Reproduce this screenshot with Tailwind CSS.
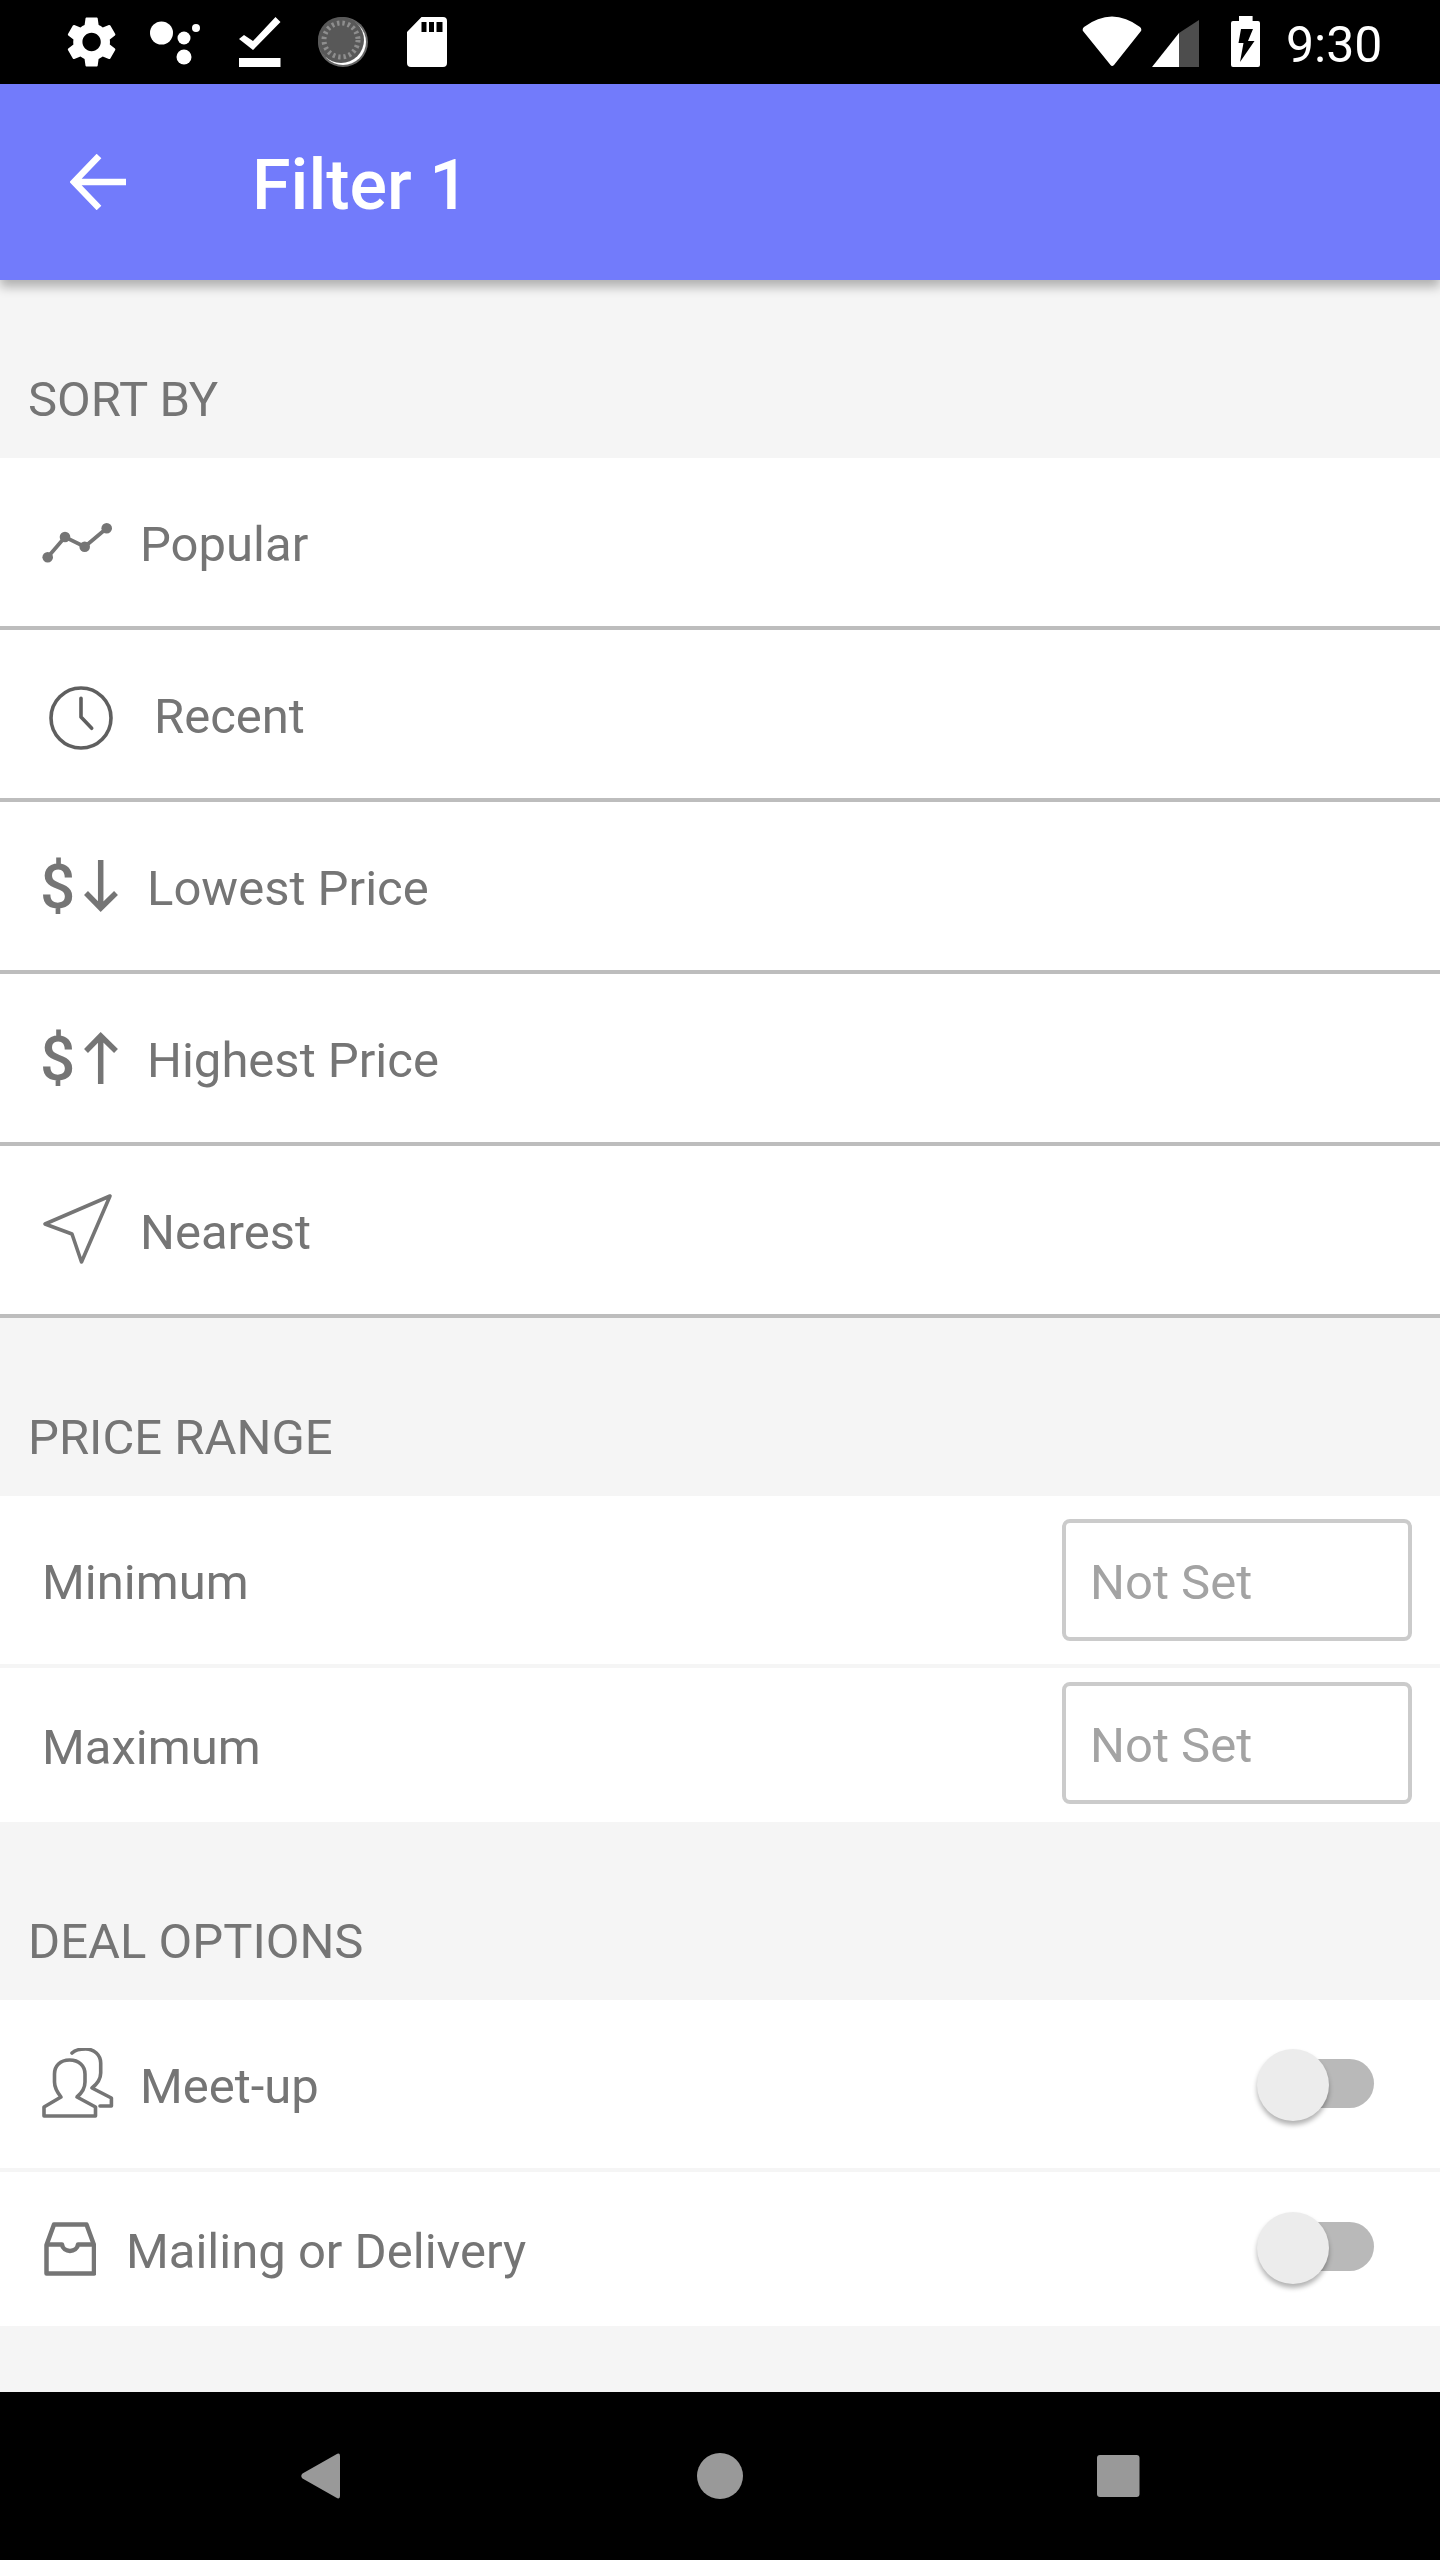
<!DOCTYPE html>
<html lang="en">
  <head>
    <meta charset="UTF-8" />
    <meta name="viewport" content="width=device-width, initial-scale=1.0" />
    <title>Filter 1</title>
    <script src="https://cdn.jsdelivr.net/npm/@tailwindcss/browser@4"></script>
  </head>
  <body class="bg-[#f5f5f5] font-['Roboto',sans-serif]">
    <div class="flex flex-col w-[1440px] h-[2560px] overflow-hidden">
      <!-- status bar -->
      <div class="h-[84px] bg-black flex items-center text-white shrink-0">
        <svg class="ml-[60px] w-[390px] h-[60px] shrink-0" viewBox="60 12 390 60" fill="#fff">
          <g transform="translate(61 11.4) scale(2.55)">
            <path d="M19.14 12.94c.04-.3.06-.61.06-.94 0-.32-.02-.64-.07-.94l2.03-1.58c.18-.14.23-.41.12-.61l-1.92-3.32c-.12-.22-.37-.29-.59-.22l-2.39.96c-.5-.38-1.03-.7-1.62-.94l-.36-2.54c-.04-.24-.24-.41-.48-.41h-3.84c-.24 0-.43.17-.47.41l-.36 2.54c-.59.24-1.13.57-1.62.94l-2.39-.96c-.22-.08-.47 0-.59.22L2.74 8.87c-.12.21-.08.47.12.61l2.03 1.58c-.05.3-.09.63-.09.94s.02.64.07.94l-2.03 1.58c-.18.14-.23.41-.12.61l1.92 3.32c.12.22.37.29.59.22l2.39-.96c.5.38 1.03.7 1.62.94l.36 2.54c.05.24.24.41.48.41h3.84c.24 0 .44-.17.47-.41l.36-2.54c.59-.24 1.13-.56 1.62-.94l2.39.96c.22.08.47 0 .59-.22l1.92-3.32c.12-.22.07-.47-.12-.61l-2.01-1.58zM12 15.6c-1.98 0-3.6-1.62-3.6-3.6s1.62-3.6 3.6-3.6 3.6 1.62 3.6 3.6-1.62 3.6-3.6 3.6z" />
          </g>
          <circle cx="161.5" cy="33" r="11.5" />
          <circle cx="184" cy="38" r="6.5" />
          <circle cx="196" cy="28" r="4" />
          <circle cx="184" cy="57" r="7.5" />
          <polygon points="275.5,17 280.5,22 253,50 239,39 244,35 253,41" />
          <rect x="239" y="58" width="41.5" height="9" />
          <circle cx="343" cy="42" r="25" fill="#666" />
          <circle cx="343" cy="42" r="23" />
          <circle cx="341" cy="40" r="23" fill="#585858" />
          <circle cx="341" cy="40" r="17" fill="none" stroke="#8e8e8e" stroke-width="5" stroke-dasharray="2.4 3" />
          <path d="M411 17H443Q447 17 447 21V63Q447 67 443 67H411Q407 67 407 63V32L421.5 17Z" />
          <rect x="421.5" y="22" width="5" height="10" fill="#000" />
          <rect x="429" y="22" width="5" height="10" fill="#000" />
          <rect x="436.5" y="22" width="6" height="10" fill="#000" />
        </svg>
        <svg class="ml-[632px] w-[180px] h-[60px] shrink-0" viewBox="1082 12 180 60" fill="#fff">
          <path d="M1083 31Q1082 29 1084 27Q1112 6 1140 27Q1142 29 1141 31L1114 65Q1112 67 1110.5 65Z" />
          <polygon points="1179,67 1152,67 1179,33" />
          <polygon points="1179,67 1179,33 1199,20 1199,67" fill="#4d4d4d" />
          <path d="M1239 16H1252.6V21H1258Q1260 21 1260 23V65Q1260 67 1258 67H1233Q1231 67 1231 65V23Q1231 21 1233 21H1239Z" />
          <polygon points="1241,29 1253,29 1248,41 1254.5,41 1240,62 1243.5,43 1238.5,43" fill="#000" />
        </svg>
        <span class="ml-[24px] pt-[6px] text-[50px] leading-none">9:30</span>
      </div>

      <!-- app bar -->
      <div class="relative z-10 h-[196px] bg-[#727bfb] flex items-center text-white shrink-0 shadow-[0_7px_10px_rgba(0,0,0,0.28)]">
        <svg class="ml-[70px] w-[56px] h-[56px] shrink-0" viewBox="70 154 56 56" fill="none" stroke="#fff" stroke-width="6.5">
          <path d="M126 182H76M99 156L74 182L99 208" />
        </svg>
        <h1 class="ml-[126px] pt-[6px] text-[70px] font-medium leading-none">Filter 1</h1>
      </div>

      <main class="flex-1 overflow-hidden text-[49px] text-[#757575]">
        <div class="h-[178px] flex items-end pl-[28px] pb-[22px]">SORT BY</div>
        <div class="bg-white">
          <div class="h-[172px] flex items-center border-b-4 border-[#bdbdbd]">
            <svg class="ml-[42px] w-[70px] h-[60px] shrink-0" viewBox="42 512 70 60" fill="#757575" stroke="#757575">
              <polyline points="47.7,557.3 65,537 84.7,546.7 106.7,528.3" fill="none" stroke-width="3.8" />
              <circle cx="47.7" cy="557.3" r="5.3" stroke="none" />
              <circle cx="65" cy="537" r="5.3" stroke="none" />
              <circle cx="84.7" cy="546.7" r="5.3" stroke="none" />
              <circle cx="106.7" cy="528.3" r="5.3" stroke="none" />
            </svg>
            <span class="ml-[28px] pt-[5px]">Popular</span>
          </div>
          <div class="h-[172px] flex items-center border-b-4 border-[#bdbdbd]">
            <svg class="ml-[48px] mt-[7px] w-[66px] h-[66px] shrink-0" viewBox="47.3 684.7 66 66" fill="none" stroke="#5f5f5f" stroke-width="3.6" stroke-linecap="round" stroke-linejoin="round">
              <circle cx="80.3" cy="717.7" r="30" />
              <path d="M80.3 698V716.7L91 728" />
            </svg>
            <span class="ml-[40px] pt-[5px]">Recent</span>
          </div>
          <div class="h-[172px] flex items-center border-b-4 border-[#bdbdbd]">
            <span class="ml-[40px] w-[35px] pt-[2px] text-[62px] font-medium leading-none shrink-0">$</span>
            <svg class="ml-[9px] w-[34px] h-[54px] shrink-0" viewBox="85 859 34 54" fill="none" stroke="#757575" stroke-width="5.5">
              <path d="M101.7 860V908M87 893L101.7 908L117 893" />
            </svg>
            <span class="ml-[29px] pt-[5px]">Lowest Price</span>
          </div>
          <div class="h-[172px] flex items-center border-b-4 border-[#bdbdbd]">
            <span class="ml-[40px] w-[35px] pt-[2px] text-[62px] font-medium leading-none shrink-0">$</span>
            <svg class="ml-[9px] w-[34px] h-[54px] shrink-0" viewBox="85 1031 34 54" fill="none" stroke="#757575" stroke-width="5.5">
              <path d="M101.7 1084V1036M87 1051L101.7 1036L117 1051" />
            </svg>
            <span class="ml-[29px] pt-[5px]">Highest Price</span>
          </div>
          <div class="h-[172px] flex items-center border-b-4 border-[#bdbdbd]">
            <svg class="ml-[42px] w-[72px] h-[72px] shrink-0" viewBox="42 1194 72 72" fill="none" stroke="#757575" stroke-width="3.6" stroke-linejoin="round">
              <polygon points="110,1196 45,1224 72,1234 81.5,1262" />
            </svg>
            <span class="ml-[26px] pt-[5px]">Nearest</span>
          </div>
        </div>

        <div class="h-[178px] flex items-end pl-[28px] pb-[22px]">PRICE RANGE</div>
        <div class="bg-white">
          <div class="h-[172px] flex items-center justify-between border-b-4 border-[#f5f5f5] pl-[42px] pr-[28px]">
            <span class="pt-[5px]">Minimum</span>
            <div class="w-[350px] h-[122px] flex items-center pl-[24px] pt-[5px] border-4 border-[#cbcbcb] rounded-[8px] text-[#a3a3a3]">Not Set</div>
          </div>
          <div class="h-[154px] flex items-center justify-between pl-[42px] pr-[28px]">
            <span class="pt-[5px]">Maximum</span>
            <div class="w-[350px] h-[122px] mb-1 flex items-center pl-[24px] pt-[5px] border-4 border-[#cbcbcb] rounded-[8px] text-[#a3a3a3]">Not Set</div>
          </div>
        </div>

        <div class="h-[178px] flex items-end pl-[28px] pb-[22px]">DEAL OPTIONS</div>
        <div class="bg-white">
          <div class="h-[172px] flex items-center justify-between border-b-4 border-[#f5f5f5] pr-[66px]">
            <div class="flex items-center">
              <svg class="ml-[42px] w-[72px] h-[72px] shrink-0" viewBox="42 2048 72 72" fill="none" stroke="#757575" stroke-width="3.6" stroke-linejoin="round" stroke-linecap="round">
                <path d="M69.6 2060C60 2060 54.5 2066 54.5 2074V2082C54.5 2088 57 2092 61 2097L44 2107V2116H95.5V2107L77 2097C83 2092 85 2088 85 2082V2074C85 2066 79 2060 69.6 2060Z" />
                <path d="M72 2053C76 2049 81 2049 85.7 2049C94 2049 100.7 2055 100.7 2063V2073C100.7 2079 97 2084 92 2088L111.4 2098V2106H100" />
              </svg>
              <span class="ml-[26px] pt-[5px]">Meet-up</span>
            </div>
            <div class="relative w-[117px] h-[72px] mt-[2px] shrink-0">
              <div class="absolute right-0 top-[10px] w-[112px] h-[49px] rounded-full bg-[#b9b9b9]"></div>
              <div class="absolute left-0 top-0 w-[72px] h-[72px] rounded-full bg-[#ececec] shadow-[0_4px_5px_rgba(0,0,0,0.3)]"></div>
            </div>
          </div>
          <div class="h-[154px] flex items-center justify-between pr-[66px]">
            <div class="flex items-center">
              <svg class="ml-[44px] w-[52px] h-[54px] shrink-0" viewBox="44 2222 52 54" fill="none" stroke="#757575" stroke-width="4.5" stroke-linejoin="round">
                <path d="M54 2224.5H86.5L94 2245V2273.5H46.5V2245Z" />
                <path d="M46.5 2244.5H62C63 2253 77 2253 78 2244.5H94" />
              </svg>
              <span class="ml-[30px] pt-[5px]">Mailing or Delivery</span>
            </div>
            <div class="relative w-[117px] h-[72px] mb-[3px] shrink-0">
              <div class="absolute right-0 top-[10px] w-[112px] h-[49px] rounded-full bg-[#b9b9b9]"></div>
              <div class="absolute left-0 top-0 w-[72px] h-[72px] rounded-full bg-[#ececec] shadow-[0_4px_5px_rgba(0,0,0,0.3)]"></div>
            </div>
          </div>
        </div>
      </main>

      <!-- navigation bar -->
      <div class="h-[168px] bg-black flex items-center shrink-0">
        <svg class="w-[1440px] h-[60px]" viewBox="0 2446 1440 60" fill="#999">
          <path d="M302.5 2473.5L336 2454.5Q340 2452 340 2456V2496Q340 2500 336 2497.5L302.5 2478.5Q300 2476 302.5 2473.5Z" />
          <circle cx="720" cy="2476" r="23" />
          <rect x="1097" y="2455" width="42.5" height="42" rx="3" />
        </svg>
      </div>
    </div>
  </body>
</html>
